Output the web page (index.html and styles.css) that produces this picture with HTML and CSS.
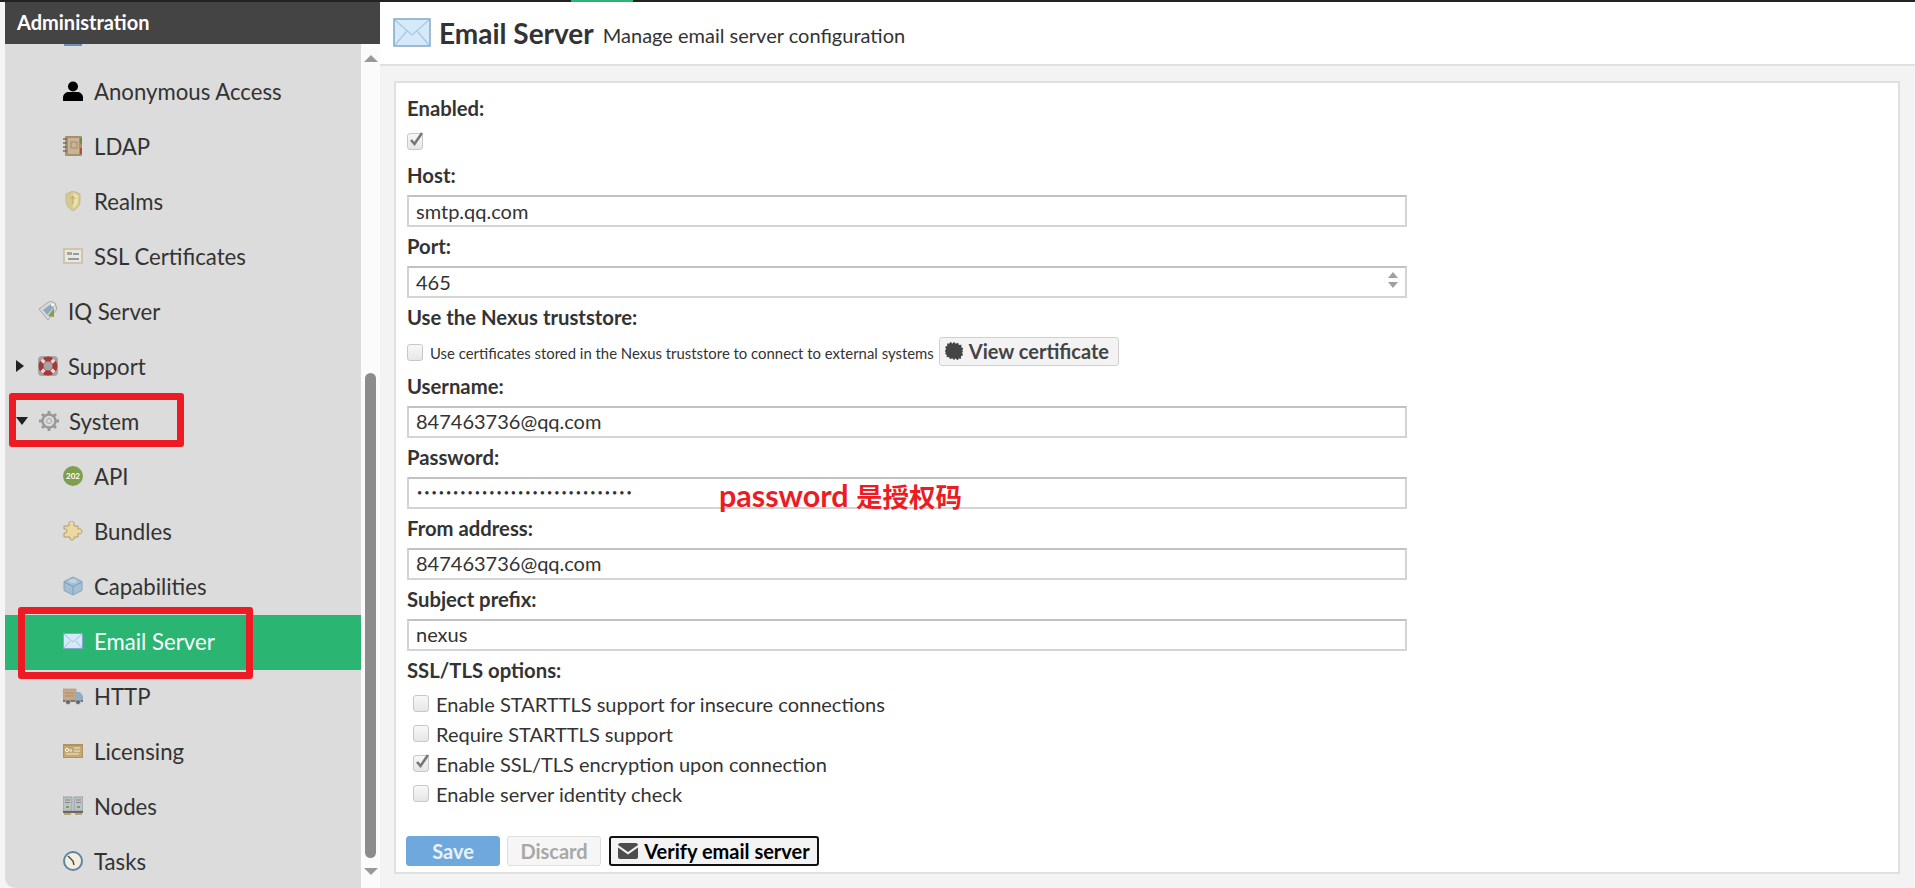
FILE: index.html
```html
<!DOCTYPE html>
<html lang="en">
<head>
  <meta charset="UTF-8">
  <meta name="viewport" content="width=device-width, initial-scale=1">
  <title>Email Server - Nexus Repository Manager</title>
  <link rel="stylesheet" href="styles.css">
</head>
<body>

  <div class="topbar"><span class="topbar-tab"></span></div>

  <div class="main">
    <aside class="sidebar">
      <h2 class="sidebar-title">Administration</h2>
      <div class="sidebar-body">
        <div class="tree">
          <ul class="tree-list">
            <li class="node child">
              <svg class="ico" viewBox="0 0 20 20"><rect x="1" y="3" width="18" height="17" fill="#6f8fb5"/></svg>
            </li>
            <li class="node child">
              <svg class="ico" viewBox="0 0 20 20"><circle cx="10" cy="5.5" r="5" fill="#000"/><path d="M0 20v-3.5C0 13 3 11 6 11h8c3 0 6 2 6 5.5V20c0 .6-.4 1-1 1H1c-.6 0-1-.4-1-1z" fill="#000"/></svg>
              Anonymous Access
            </li>
            <li class="node child">
              <svg class="ico" viewBox="0 0 20 20"><rect x="2" y="0" width="17" height="20" rx="1" fill="#a98f6e"/><rect x="5" y="2" width="11" height="16" fill="#c9b596"/><rect x="8" y="6" width="6" height="6" fill="none" stroke="#a08a6a"/><rect x="17" y="2" width="2" height="6" fill="#6d8f47"/><rect x="17" y="12" width="2" height="6" fill="#a5533f"/><path d="M0 3h4M0 7h4M0 11h4M0 15h4" stroke="#77705f" stroke-width="1.6"/></svg>
              LDAP
            </li>
            <li class="node child">
              <svg class="ico" viewBox="0 0 20 20"><path d="M10 0l7 3v7c0 5-4 8-7 10-3-2-7-5-7-10V3z" fill="#d6c98d" stroke="#c6b98a"/><path d="M10 2l5 2v6c0 3-2 6-5 8z" fill="#e9e0ae"/><path d="M10 5v8M7.500 8L10 5.500 12.500 8" stroke="#b5a66c" fill="none"/></svg>
              Realms
            </li>
            <li class="node child">
              <svg class="ico" viewBox="0 0 20 20"><rect x="0" y="2" width="20" height="16" fill="#cfc4ad"/><rect x="2" y="4" width="16" height="12" fill="#ece8dc"/><rect x="4" y="6" width="5" height="3" fill="#a3a49c"/><path d="M5 13h11M10 8h6" stroke="#6d8294" stroke-width="1.300"/></svg>
              SSL Certificates
            </li>
            <li class="node">
              <svg class="ico" viewBox="0 0 20 20"><path d="M1 8L12 0l5 2 2 6-9 11z" fill="#d8d8d4" stroke="#9b9b96" stroke-width=".8"/><path d="M5 9l8-6 3 3-7 8z" fill="#8ba9bf"/><path d="M10 15l6-8v9z" fill="#8a9a4e"/><circle cx="14.500" cy="4" r="1.400" fill="#fff"/></svg>
              IQ Server
            </li>
            <li class="node has-arrow">
              <span class="arrow-right"></span>
              <svg class="ico" viewBox="0 0 20 20"><rect x="0" y="0" width="20" height="20" rx="4" fill="#a5a5a5"/><circle cx="10" cy="10" r="7" fill="none" stroke="#a8383a" stroke-width="5"/><path d="M3.500 3.500L6.500 6.500M16.500 3.500L13.500 6.500M3.500 16.500L6.500 13.500M16.500 16.500L13.500 13.500" stroke="#e3dcd6" stroke-width="3.200"/></svg>
              Support
            </li>
            <li class="node has-arrow">
              <span class="arrow-down"></span>
              <svg class="ico" viewBox="0 0 20 20"><circle cx="10" cy="10" r="6.500" fill="none" stroke="#999" stroke-width="2.400"/><path d="M10 0v4M10 16v4M0 10h4M16 10h4M3 3l3 3M14 14l3 3M17 3l-3 3M6 14l-3 3" stroke="#999" stroke-width="2.800"/><circle cx="10" cy="10" r="2.500" fill="none" stroke="#a5a5a5"/></svg>
              System
            </li>
            <li class="node child">
              <svg class="ico" viewBox="0 0 20 20"><circle cx="10" cy="10" r="10" fill="#7f9f4f"/><text x="10" y="13" class="ico-num">202</text></svg>
              API
            </li>
            <li class="node child">
              <svg class="ico" viewBox="0 0 20 20"><path d="M1 5h5V3c0-2 1-3 2.500-3S11 1 11 3v2h4v3c2-.5 4 0 4 2.500S17 13 15 12.500V16h-4c.5 2-.5 3-2 3s-2.500-1-2-3H1v-4c2 .5 3-.5 3-2s-1-2.500-3-2z" fill="#edd9a0" stroke="#b09a78"/></svg>
              Bundles
            </li>
            <li class="node child">
              <svg class="ico" viewBox="0 0 20 20"><path d="M10 1l9 4.500v9L10 19l-9-4.500v-9z" fill="#a3bfd6" stroke="#86a4bd"/><path d="M1 6l9 4.500L19 6M10 10.500V19" stroke="#7f9db6" fill="none"/><ellipse cx="10" cy="5" rx="4" ry="2" fill="#bed3e4"/></svg>
              Capabilities
            </li>
            <li class="node child active">
              <svg class="ico" viewBox="0 0 20 16"><rect x=".5" y=".5" width="19" height="15" fill="#d5e9f9" stroke="#7fa9cc"/><path d="M1 1l9 8 9-8M1 15l6-7M19 15l-6-7" stroke="#9fc3e0" fill="none"/></svg>
              Email Server
            </li>
            <li class="node child">
              <svg class="ico" viewBox="0 0 20 20"><rect x="0" y="3" width="13" height="11" fill="#c9a983" stroke="#a88d6d" stroke-width=".6"/><path d="M2 7h9M2 10h9" stroke="#a88d6d"/><path d="M13 6h4l3 4v5h-7z" fill="#8eadc7"/><rect x="0" y="14" width="20" height="2" fill="#77787a"/><circle cx="5" cy="16" r="2.500" fill="#666" stroke="#dcdcdc" stroke-width=".6"/><circle cx="15" cy="16" r="2.500" fill="#666" stroke="#dcdcdc" stroke-width=".6"/></svg>
              HTTP
            </li>
            <li class="node child">
              <svg class="ico" viewBox="0 0 20 20"><rect x="0" y="3" width="20" height="14" fill="#b09362"/><rect x="1" y="5" width="18" height="11" fill="#c4a872"/><circle cx="4" cy="9" r="1.600" fill="none" stroke="#fff"/><path d="M5 9h4M8 9v2M11 7h6M11 10h6M3 13h13" stroke="#f5ecd6"/></svg>
              Licensing
            </li>
            <li class="node child">
              <svg class="ico" viewBox="0 0 20 20"><rect x="0" y="1" width="9" height="14" fill="#bcc3c8" stroke="#86898c" stroke-width=".7"/><rect x="11" y="1" width="9" height="14" fill="#bcc3c8" stroke="#86898c" stroke-width=".7"/><path d="M2 4h5M2 6.500h5M13 4h5M13 6.500h5" stroke="#81868a"/><path d="M3 11h3M14 11h3" stroke="#5f9a3a" stroke-width="1.400"/><rect x="0" y="15" width="20" height="2" fill="#66686a"/><rect x="1" y="17" width="7" height="2" fill="#bfa26e"/><rect x="12" y="17" width="7" height="2" fill="#bfa26e"/></svg>
              Nodes
            </li>
            <li class="node child">
              <svg class="ico" viewBox="0 0 20 20"><circle cx="10" cy="10" r="9" fill="#f2efdf" stroke="#5f84a3" stroke-width="2"/><path d="M5 5l5 5 1 4" stroke="#444" stroke-width="1.400" fill="none"/></svg>
              Tasks
            </li>
          </ul>
        </div>
        <div class="tree-scroll">
          <span class="scroll-up"></span>
          <span class="scroll-thumb"></span>
          <span class="scroll-down"></span>
        </div>
      </div>
      <span class="mark mark-system"></span>
      <span class="mark mark-email"></span>
    </aside>

    <section class="content">
      <header class="page-head">
        <svg class="page-ico" viewBox="0 0 38 30"><rect x="1" y="1" width="36" height="27" fill="#d5e9f9" stroke="#7fa9cc" stroke-width="1.500"/><path d="M2 2l17 15L36 2M2 27l12-14M36 27L24 13" stroke="#a5c9e6" stroke-width="1.200" fill="none"/></svg>
        <h1 class="page-title">Email Server</h1>
        <span class="page-sub">Manage email server configuration</span>
      </header>

      <form class="card">
        <label class="lbl">Enabled:</label>
        <div class="check-row">
          <span class="check on"><svg viewBox="0 0 16 16"><path d="M3 8l3.500 4L14 1" fill="none" stroke="#777" stroke-width="2.600"/></svg></span>
        </div>

        <label class="lbl">Host:</label>
        <input class="txt" type="text" value="smtp.qq.com">

        <label class="lbl">Port:</label>
        <div class="spin-wrap">
          <input class="txt" type="text" value="465">
          <svg class="spin" viewBox="0 0 10 16"><path d="M5 0l5 6H0zM5 16L0 10h10z" fill="#a0a0a0"/></svg>
        </div>

        <label class="lbl">Use the Nexus truststore:</label>
        <div class="trust-row">
          <span class="check"></span>
          <span class="trust-text">Use certificates stored in the Nexus truststore to connect to external systems</span>
          <button type="button" class="btn-cert">
            <svg class="cert-ico" viewBox="0 0 20 20"><path d="M10 0l2 2 2.500-1.300 1 2.600 2.800-.2-.2 2.800 2.600 1L19 9.500l1 .5-1 2.500 1.300 2.200-2.600 1 .2 2.800-2.800-.2-1 2.600L12 18l-2 2-2-2-2.500 1.300-1-2.600-2.800.2.200-2.800-2.600-1L1 12.500 0 10l1.200-2.500L-.100 5.400l2.600-1-.2-2.800 2.800.2 1-2.600L8 2z" fill="#444"/></svg>
            View certificate
          </button>
        </div>

        <label class="lbl">Username:</label>
        <input class="txt" type="text" value="847463736@qq.com">

        <label class="lbl">Password:</label>
        <div class="pass-wrap">
          <input class="txt pass" type="password" value="aaaaaaaaaaaaaaaaaaaaaaaaaaaaaa">
          <span class="note">password <span class="note-cjk">是授权码</span></span>
        </div>

        <label class="lbl">From address:</label>
        <input class="txt" type="text" value="847463736@qq.com">

        <label class="lbl">Subject prefix:</label>
        <input class="txt" type="text" value="nexus">

        <label class="lbl">SSL/TLS options:</label>
        <ul class="opts">
          <li class="opt"><span class="check"></span>Enable STARTTLS support for insecure connections</li>
          <li class="opt"><span class="check"></span>Require STARTTLS support</li>
          <li class="opt"><span class="check on"><svg viewBox="0 0 16 16"><path d="M3 8l3.500 4L14 1" fill="none" stroke="#777" stroke-width="2.600"/></svg></span>Enable SSL/TLS encryption upon connection</li>
          <li class="opt"><span class="check"></span>Enable server identity check</li>
        </ul>

        <div class="actions">
          <button type="button" class="btn btn-save">Save</button>
          <button type="button" class="btn btn-discard">Discard</button>
          <button type="button" class="btn btn-verify">
            <svg class="mail-ico" viewBox="0 0 20 16"><path d="M0 2c0-1 1-2 2-2h16c1 0 2 1 2 2L10 9zM0 4.500V14c0 1 1 2 2 2h16c1 0 2-1 2-2V4.500L10 11.500z" fill="#4d4d4d"/></svg>
            Verify email server
          </button>
        </div>
      </form>
    </section>
  </div>

</body>
</html>
```

FILE: styles.css
```css
* {
  box-sizing: border-box;
}
html, body {
  height: 100%;
}
body {
  margin: 0;
  overflow: hidden;
  display: flex;
  flex-direction: column;
  font-family: 'Lato', 'Noto Sans CJK SC', sans-serif;
  color: #333;
  background: #f5f5f5;
}
.topbar {
  height: 2px;
  flex: none;
  background: #222;
  padding-left: 571px;
}
.topbar-tab {
  display: block;
  width: 62px;
  height: 2px;
  background: #2ab573;
}
.main {
  flex: 1;
  display: flex;
  min-height: 0;
  padding-left: 5px;
}

/* left tree */
.sidebar {
  position: relative;
  width: 375px;
  flex: none;
  display: flex;
  flex-direction: column;
}
.sidebar-title {
  margin: 0;
  height: 42px;
  flex: none;
  padding-left: 12px;
  background: #444;
  color: #fff;
  font-size: 20px;
  font-weight: 700;
  line-height: 40px;
}
.sidebar-body {
  flex: 1;
  display: flex;
  min-height: 0;
}
.tree {
  flex: 1;
  overflow: hidden;
  background: #dcdcdc;
  border-bottom-left-radius: 10px;
}
.tree-list {
  list-style: none;
  margin: -34.5px 0 0;
  padding: 0;
}
.node {
  display: flex;
  align-items: center;
  height: 55px;
  padding-left: 33px;
  padding-bottom: 2px;
  font-size: 22.2px;
  color: #333;
}
.node.child {
  padding-left: 58px;
}
.node.has-arrow {
  padding-left: 11px;
}
.node.active {
  background: #2ab573;
  color: #fff;
}
.ico {
  width: 20px;
  height: 20px;
  flex: none;
  margin-right: 10px;
}
.node.child .ico {
  margin-right: 11px;
}
.ico-num {
  font-size: 8px;
  font-weight: 700;
  fill: #fff;
  text-anchor: middle;
}
.arrow-right {
  width: 0;
  height: 0;
  margin-right: 14px;
  border-left: 8px solid #222;
  border-top: 6px solid transparent;
  border-bottom: 6px solid transparent;
}
.arrow-down {
  width: 0;
  height: 0;
  margin-right: 11px;
  border-top: 8px solid #222;
  border-left: 6px solid transparent;
  border-right: 6px solid transparent;
}
.tree-scroll {
  width: 19px;
  flex: none;
  display: flex;
  flex-direction: column;
  align-items: center;
  background: #fbfbfb;
}
.scroll-up {
  margin-top: 11px;
  border-bottom: 7px solid #999;
  border-left: 7px solid transparent;
  border-right: 7px solid transparent;
}
.scroll-thumb {
  width: 11px;
  height: 485px;
  margin-top: 311px;
  border-radius: 6px;
  background: #8c8c8c;
}
.scroll-down {
  margin-top: 10px;
  border-top: 7px solid #999;
  border-left: 7px solid transparent;
  border-right: 7px solid transparent;
}

/* red boxes drawn over the screenshot */
.mark {
  position: absolute;
  border: 7px solid #ed1c24;
  border-radius: 3px;
  pointer-events: none;
}
.mark-system {
  left: 4px;
  top: 391px;
  width: 175px;
  height: 54px;
}
.mark-email {
  left: 13px;
  top: 605px;
  width: 235px;
  height: 72px;
}

/* content */
.content {
  flex: 1;
  min-width: 0;
  display: flex;
  flex-direction: column;
  background: #f3f3f3;
}
.page-head {
  height: 64px;
  flex: none;
  display: flex;
  align-items: center;
  padding-left: 13px;
  background: #fff;
  border-bottom: 2px solid #e0e0e0;
}
.page-ico {
  width: 38px;
  height: 30px;
  margin-right: 8px;
}
.page-title {
  margin: 0 9px 0 0;
  font-size: 28px;
  font-weight: 700;
  color: #333;
}
.page-sub {
  font-size: 20px;
  margin-top: 3px;
}
.card {
  flex: none;
  width: 1506px;
  height: 793px;
  margin: 15px 0 0 14px;
  padding: 5.5px 11px 0;
  background: #fff;
  border: 2px solid #e0e0e0;
}
.lbl {
  display: block;
  height: 39px;
  font-size: 20.3px;
  font-weight: 700;
  line-height: 39px;
}
.txt {
  display: block;
  width: 1000px;
  height: 32px;
  padding: 0 7px 1px;
  background: #fff;
  border: 2px solid #d4d4d4;
  border-top-color: #c2c2c2;
  border-radius: 0;
  font-family: inherit;
  font-size: 20px;
  color: #333;
  outline: none;
}
.pass {
  padding-left: 8px;
  font-size: 9px;
  letter-spacing: 2px;
}
.spin-wrap, .pass-wrap {
  position: relative;
}
.spin {
  position: absolute;
  left: 981px;
  top: 6px;
  width: 10px;
  height: 16px;
}
.note {
  position: absolute;
  left: 312px;
  top: 3px;
  font-size: 30.5px;
  font-weight: 700;
  line-height: 30px;
  white-space: nowrap;
  color: #ed1c24;
}
.note-cjk {
  font-size: 26.5px;
}
.check-row {
  height: 28.5px;
  padding-top: 5px;
}
.check {
  display: inline-block;
  flex: none;
  width: 16px;
  height: 17px;
  background: linear-gradient(#f8f8f8, #e6e6e6);
  border: 1px solid #c8c8c8;
  border-radius: 3px;
  vertical-align: top;
}
.check svg {
  display: block;
  width: 16px;
  height: 16px;
  margin: -2px 0 0 0;
  overflow: visible;
}
.trust-row {
  height: 29.5px;
  display: flex;
  align-items: flex-start;
}
.trust-row .check {
  margin-top: 7px;
}
.trust-text {
  margin: 7px 5px 0 7px;
  font-size: 14.9px;
  white-space: nowrap;
}
.btn-cert {
  display: flex;
  align-items: center;
  height: 29px;
  padding: 0 9px 2px 5px;
  background: #f3f3f3;
  border: 1px solid #d0d0d0;
  border-radius: 3px;
  font-family: inherit;
  font-size: 20px;
  font-weight: 700;
  color: #444;
}
.cert-ico {
  width: 18px;
  height: 18px;
  margin-right: 6px;
}
.opts {
  list-style: none;
  margin: 0;
  padding: 0 0 0 6px;
}
.opt {
  display: flex;
  align-items: center;
  height: 30px;
  padding-bottom: 2px;
  font-size: 20px;
}
.opt .check {
  margin-right: 7px;
}
.actions {
  display: flex;
  gap: 7px;
  margin: 26px 0 0 -1px;
}
.btn {
  height: 30px;
  border-radius: 3px;
  font-family: inherit;
  font-size: 20px;
  font-weight: 700;
  padding: 0;
}
.btn-save {
  width: 94px;
  background: #6fa8dc;
  border: 1px solid #6fa8dc;
  color: #e9f1f9;
}
.btn-discard {
  width: 94px;
  background: #f6f6f6;
  border: 1px solid #dedede;
  color: #a8a8a8;
}
.btn-verify {
  width: 210px;
  margin-left: 1px;
  display: flex;
  align-items: center;
  justify-content: center;
  background: #f3f3f3;
  border: 2px solid #111;
  color: #000;
}
.mail-ico {
  width: 20px;
  height: 16px;
  margin-right: 6px;
}
```
